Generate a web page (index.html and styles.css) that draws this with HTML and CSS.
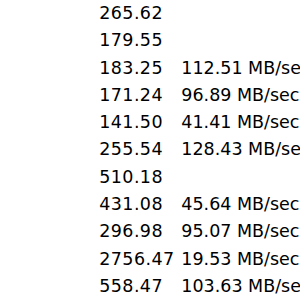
FILE: index.html
```html
<!DOCTYPE html>
<html lang="en">
<head>
    <meta charset="UTF-8">
    <title>Disk speed</title>
    <link rel="stylesheet" href="styles.css">
</head>
<body>
    <div class="speeds">
        <div class="time">265.62</div><div class="rate"></div>
        <div class="time">179.55</div><div class="rate"></div>
        <div class="time">183.25</div><div class="rate">112.51 MB/sec</div>
        <div class="time">171.24</div><div class="rate">96.89 MB/sec</div>
        <div class="time">141.50</div><div class="rate">41.41 MB/sec</div>
        <div class="time">255.54</div><div class="rate">128.43 MB/sec</div>
        <div class="time">510.18</div><div class="rate"></div>
        <div class="time">431.08</div><div class="rate">45.64 MB/sec</div>
        <div class="time">296.98</div><div class="rate">95.07 MB/sec</div>
        <div class="time">2756.47</div><div class="rate">19.53 MB/sec</div>
        <div class="time">558.47</div><div class="rate">103.63 MB/sec</div>
    </div>
</body>
</html>
```

FILE: styles.css
```css
* {
    margin: 0;
    padding: 0;
    box-sizing: border-box;
}

html, body {
    background: #fff;
    overflow: hidden;
}

body {
    font-family: 'DejaVu Sans', sans-serif;
    font-size: 17.5px;
    color: #000;
}

.speeds {
    display: grid;
    grid-template-columns: 82px auto;
    grid-auto-rows: 27.3px;
    padding-left: 99.3px;
    white-space: nowrap;
}

.time,
.rate {
    line-height: 27.3px;
}

.time {
    letter-spacing: 0.4px;
}
```
